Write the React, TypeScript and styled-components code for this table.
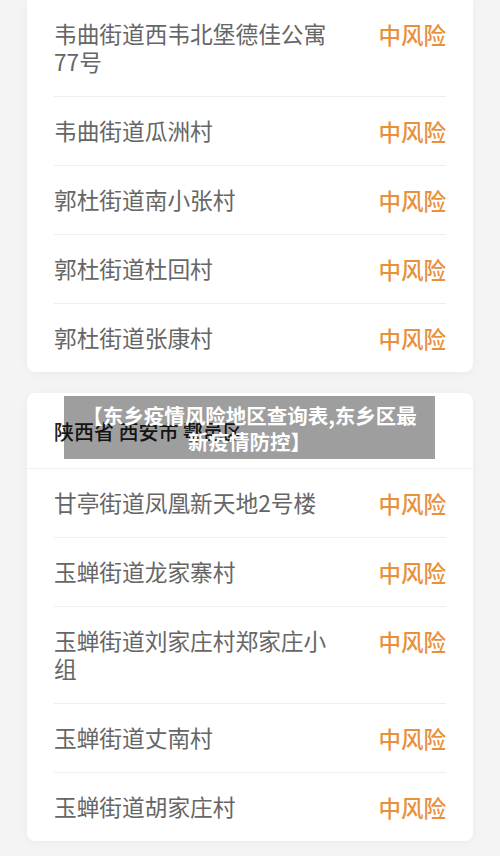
import React from 'react';
import styled, { createGlobalStyle } from 'styled-components';

const GlobalStyle = createGlobalStyle`
  html, body {
    margin: 0;
    padding: 0;
    background: #f4f4f4;
    font-family: "Noto Sans CJK SC", "Noto Sans", sans-serif;
  }
`;

const Page = styled.div`
  position: relative;
  width: 500px;
  height: 856px;
  overflow: hidden;
  background: #f4f4f4;
  display: flex;
  flex-direction: column;
  gap: 21px;
  padding: 0 27px;
  box-sizing: border-box;
`;

const Card = styled.div<{ $cutTop?: boolean }>`
  background: #fff;
  border-radius: ${p => (p.$cutTop ? '0 0 8px 8px' : '8px')};
  box-shadow: 0 2px 10px rgba(0, 0, 0, 0.04);
  padding: 0 27px;
`;

const Header = styled.div`
  height: 76px;
  margin: 0 -27px;
  padding: 2px 27px 0;
  display: flex;
  align-items: center;
  box-sizing: border-box;
  border-bottom: 1px solid #f0f0f0;
  font-size: 20px;
  font-weight: 500;
  color: #222;
`;

const Row = styled.div`
  display: flex;
  align-items: flex-start;
  justify-content: space-between;
  padding: 20px 0;
  border-bottom: 1px solid #efefef;
  &:last-child {
    border-bottom: none;
  }
`;

const Place = styled.div`
  width: 290px;
  font-size: 22.7px;
  line-height: 28px;
  color: #666;
`;

const Risk = styled.div`
  font-size: 22.5px;
  line-height: 28px;
  color: #e8913a;
  font-weight: 500;
  white-space: nowrap;
`;

const Caption = styled.div`
  position: absolute;
  left: 64px;
  top: 396px;
  width: 371px;
  height: 63px;
  background: rgba(0, 0, 0, 0.38);
  color: #fff;
  font-size: 20.5px;
  font-weight: 700;
  line-height: 26px;
  text-align: center;
  display: flex;
  align-items: center;
  justify-content: center;
  padding: 0 15px;
  box-sizing: border-box;
`;

const topRows = ['韦曲街道西韦北堡德佳公寓77号', '韦曲街道瓜洲村', '郭杜街道南小张村', '郭杜街道杜回村', '郭杜街道张康村'];
const bottomRows = ['甘亭街道凤凰新天地2号楼', '玉蝉街道龙家寨村', '玉蝉街道刘家庄村郑家庄小组', '玉蝉街道丈南村', '玉蝉街道胡家庄村'];

function RiskRow({ name }: { name: string }) {
  return (
    <Row>
      <Place>{name}</Place>
      <Risk>中风险</Risk>
    </Row>
  );
}

export default function App() {
  return (
    <>
      <GlobalStyle />
      <Page>
        <Card $cutTop>
          {topRows.map(n => (
            <RiskRow key={n} name={n} />
          ))}
        </Card>
        <Card>
          <Header>陕西省 西安市 鄠邑区</Header>
          {bottomRows.map(n => (
            <RiskRow key={n} name={n} />
          ))}
        </Card>
        <Caption>【东乡疫情风险地区查询表,东乡区最新疫情防控】</Caption>
      </Page>
    </>
  );
}
